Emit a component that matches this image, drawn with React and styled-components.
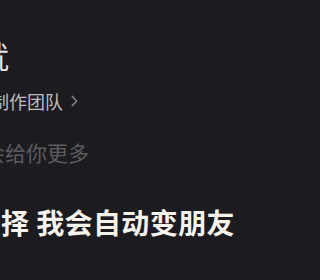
import React from "react";
import styled, { createGlobalStyle } from "styled-components";

const Global = createGlobalStyle`
  html, body { margin: 0; padding: 0; background: #1c1b1f; }
  body { width: 280px; height: 280px; overflow: hidden; }
`;

const Page = styled.div`
  width: 280px;
  height: 280px;
  overflow: hidden;
  background: #1c1b1f;
  font-family: "Noto Sans CJK SC", "Noto Sans", sans-serif;
  display: flex;
  flex-direction: column;
`;

const Line = styled.div`
  display: flex;
  align-items: center;
  white-space: nowrap;
  margin-left: ${(p) => p.$shift}px;
  margin-top: ${(p) => p.$top}px;
  font-size: ${(p) => p.$size}px;
  line-height: ${(p) => p.$size}px;
  font-weight: ${(p) => p.$weight || 400};
  letter-spacing: ${(p) => p.$spacing || 0}px;
  color: ${(p) => p.$color};
`;

const Chevron = styled.svg`
  margin-left: 8px;
  width: 7px;
  height: 12px;
  flex: none;
`;

export default function App() {
  return (
    <>
      <Global />
      <Page>
        <Line $shift={-23} $top={39} $size={32} $color="#e6e6e6">就</Line>
        <Line $shift={-9} $top={21} $size={18} $color="#bdbdbd">
          制作团队
          <Chevron viewBox="0 0 7 12">
            <path d="M1.2 1.2 L5.6 6 L1.2 10.8" fill="none" stroke="#8a8a8d" strokeWidth="1.4" strokeLinecap="round" strokeLinejoin="round" />
          </Chevron>
        </Line>
        <Line $shift={-16} $top={32} $size={21} $color="#5c5c60">会给你更多</Line>
        <Line $shift={1} $top={45} $size={28} $weight={700} $spacing={0.4} $color="#f4f2ea">择 我会自动变朋友</Line>
      </Page>
    </>
  );
}
